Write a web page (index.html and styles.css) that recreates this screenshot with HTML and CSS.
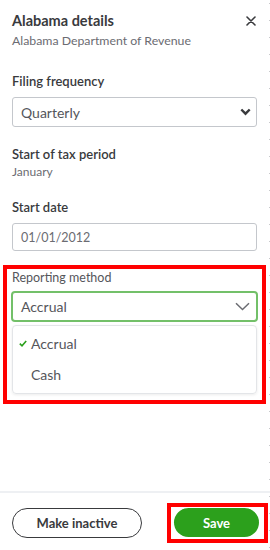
FILE: index.html
```html
<!DOCTYPE html>
<html lang="en">
<head>
    <meta charset="UTF-8">
    <title>Alabama details</title>
    <link rel="stylesheet" href="styles.css">
</head>
<body>
<div id="panel">
    <div class="content">
        <div class="head">
            <div>
                <div class="title">Alabama details</div>
                <div class="subtitle">Alabama Department of Revenue</div>
            </div>
            <a href="javascript:;" class="close">
                <svg width="10" height="10" viewBox="0 0 10 10"><path d="M1 1L9 9M9 1L1 9" stroke="#393a3d" stroke-width="1.6" stroke-linecap="round"/></svg>
            </a>
        </div>

        <div class="field">
            <div class="label">Filing frequency</div>
            <div class="select">
                <span>Quarterly</span>
                <svg width="11" height="8" viewBox="0 0 11 8"><path d="M1.3 1.5L5.5 5.7L9.7 1.5" fill="none" stroke="#393a3d" stroke-width="2.4"/></svg>
            </div>
        </div>

        <div class="field">
            <div class="label">Start of tax period</div>
            <div class="value">January</div>
        </div>

        <div class="field">
            <div class="label">Start date</div>
            <div class="input">01/01/2012</div>
        </div>

        <div class="mark">
            <div class="label light">Reporting method</div>
            <div class="select focus">
                <span>Accrual</span>
                <svg width="15" height="9" viewBox="0 0 15 9"><path d="M1 1.2L7.5 7.5L14 1.2" fill="none" stroke="#6b6c72" stroke-width="1.5"/></svg>
            </div>
            <ul class="menu">
                <li class="on">
                    <svg width="8" height="7" viewBox="0 0 8 7"><path d="M0.8 3.6L3 5.8L7.2 1" fill="none" stroke="#2ca01c" stroke-width="1.6"/></svg>
                    <span>Accrual</span>
                </li>
                <li><span>Cash</span></li>
            </ul>
        </div>
    </div>

    <div class="footer">
        <a href="javascript:;" class="btn ghost">Make inactive</a>
        <div class="mark-btn">
            <a href="javascript:;" class="btn save">Save</a>
        </div>
    </div>
</div>
</body>
</html>
```

FILE: styles.css
```css
html,body,ul,li{
    margin: 0;
    padding: 0;
}
body{
    font-family: Lato, "Open Sans", sans-serif;
    color: #393a3d;
    background: #fff;
}
#panel{
    height: 550px;
    display: flex;
    flex-direction: column;
    /* dotted edge on the right */
    background: repeating-linear-gradient(to bottom, #c8c9cc 0 1px, transparent 1px 17px) right 3px / 1px 100% no-repeat;
}
.content{
    flex: 1;
    padding: 11px 13px 0 12px;
}
.head{
    display: flex;
    justify-content: space-between;
    align-items: flex-start;
}
.title{
    font-size: 14.5px;
    font-weight: bold;
    line-height: 20px;
}
.subtitle{
    margin-top: 2px;
    font-size: 12.3px;
    line-height: 16px;
    color: #6b6c72;
}
.close{
    display: flex;
    margin: 5px 1px 0 0;
}
.field{
    margin-top: 23px;
}
.field + .field{
    margin-top: 18px;
}
.label{
    font-size: 13px;
    font-weight: 600;
    line-height: 18px;
}
.label.light{
    font-weight: normal;
    font-size: 12.5px;
    line-height: 16px;
    color: #55565b;
}
.value{
    font-size: 12px;
    line-height: 16px;
    color: #6b6c72;
    margin-top: 1px;
}
.select,.input{
    box-sizing: border-box;
    display: flex;
    align-items: center;
    justify-content: space-between;
    margin-top: 7px;
    height: 30px;
    padding: 0 5px 0 8px;
    border: 1px solid #c4c7cc;
    border-radius: 3px;
    font-size: 14px;
    color: #55565b;
}
.input{
    height: 28px;
    font-size: 12.5px;
    color: #6b6c72;
}
.mark{
    margin: 14px -9px 0 -9px;
    padding: 1px 5px 6px 5px;
    border: 4px solid #ff0000;
}
.select.focus{
    margin: 5px -1px 0 -1px;
    height: 31px;
    padding: 0 6px 0 8px;
    border: 2px solid #73c069;
    border-radius: 4px;
}
.menu{
    list-style: none;
    margin-top: 3px;
    padding: 2px 0 3px;
    border: 1px solid #e3e5e8;
    border-radius: 4px;
    box-shadow: 0 1px 3px rgba(0,0,0,0.08);
}
.menu li{
    display: flex;
    align-items: center;
    height: 31px;
    padding-left: 6px;
    font-size: 14px;
    color: #55565b;
}
.menu li span{
    margin-left: 12px;
}
.menu li.on span{
    margin-left: 4px;
}
.footer{
    display: flex;
    justify-content: space-between;
    align-items: flex-start;
    padding: 10px 2px 7px 12px;
    border-top: 2px solid #eef0f3;
}
.btn{
    box-sizing: border-box;
    display: flex;
    align-items: center;
    justify-content: center;
    height: 30px;
    border-radius: 15px;
    font-size: 13px;
    font-weight: bold;
    text-decoration: none;
}
.ghost{
    margin-top: 5px;
    width: 130px;
    border: 1.5px solid #393a3d;
    color: #393a3d;
}
.mark-btn{
    display: flex;
    padding: 1px 5px 2px 3px;
    border: 4px solid #ff0000;
}
.save{
    width: 85px;
    height: 29px;
    background: #2ca01c;
    color: #fff;
}
```
